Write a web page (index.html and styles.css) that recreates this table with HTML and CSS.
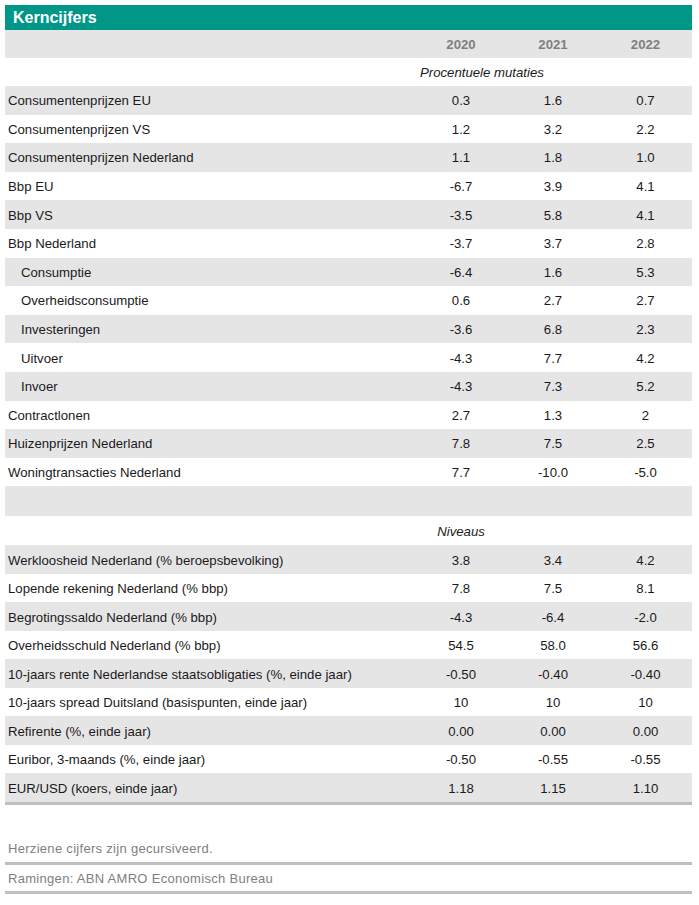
FILE: index.html
```html
<!DOCTYPE html>
<html lang="nl">
<head>
<meta charset="utf-8">
<title>Kerncijfers</title>
<link rel="stylesheet" href="styles.css">
</head>
<body>
<div class="sheet">
  <div class="title">Kerncijfers</div>
  <div class="row head gray"><span></span><span>2020</span><span>2021</span><span>2022</span></div>
  <div class="row section"><span></span><span class="sec-wide">Procentuele mutaties</span></div>
  <div class="row gray"><span>Consumentenprijzen EU</span><span>0.3</span><span>1.6</span><span>0.7</span></div>
  <div class="row"><span>Consumentenprijzen VS</span><span>1.2</span><span>3.2</span><span>2.2</span></div>
  <div class="row gray"><span>Consumentenprijzen Nederland</span><span>1.1</span><span>1.8</span><span>1.0</span></div>
  <div class="row"><span>Bbp EU</span><span>-6.7</span><span>3.9</span><span>4.1</span></div>
  <div class="row gray"><span>Bbp VS</span><span>-3.5</span><span>5.8</span><span>4.1</span></div>
  <div class="row"><span>Bbp Nederland</span><span>-3.7</span><span>3.7</span><span>2.8</span></div>
  <div class="row gray sub"><span>Consumptie</span><span>-6.4</span><span>1.6</span><span>5.3</span></div>
  <div class="row sub"><span>Overheidsconsumptie</span><span>0.6</span><span>2.7</span><span>2.7</span></div>
  <div class="row gray sub"><span>Investeringen</span><span>-3.6</span><span>6.8</span><span>2.3</span></div>
  <div class="row sub"><span>Uitvoer</span><span>-4.3</span><span>7.7</span><span>4.2</span></div>
  <div class="row gray sub"><span>Invoer</span><span>-4.3</span><span>7.3</span><span>5.2</span></div>
  <div class="row"><span>Contractlonen</span><span>2.7</span><span>1.3</span><span>2</span></div>
  <div class="row gray"><span>Huizenprijzen Nederland</span><span>7.8</span><span>7.5</span><span>2.5</span></div>
  <div class="row"><span>Woningtransacties Nederland</span><span>7.7</span><span>-10.0</span><span>-5.0</span></div>
  <div class="row gray blank"><span></span><span></span><span></span><span></span></div>
  <div class="row section niv"><span></span><span>Niveaus</span></div>
  <div class="row gray low"><span>Werkloosheid Nederland (% beroepsbevolking)</span><span>3.8</span><span>3.4</span><span>4.2</span></div>
  <div class="row low"><span>Lopende rekening Nederland (% bbp)</span><span>7.8</span><span>7.5</span><span>8.1</span></div>
  <div class="row gray low"><span>Begrotingssaldo Nederland (% bbp)</span><span>-4.3</span><span>-6.4</span><span>-2.0</span></div>
  <div class="row low"><span>Overheidsschuld Nederland (% bbp)</span><span>54.5</span><span>58.0</span><span>56.6</span></div>
  <div class="row gray low"><span>10-jaars rente Nederlandse staatsobligaties (%, einde jaar)</span><span>-0.50</span><span>-0.40</span><span>-0.40</span></div>
  <div class="row low"><span>10-jaars spread Duitsland (basispunten, einde jaar)</span><span>10</span><span>10</span><span>10</span></div>
  <div class="row gray low"><span>Refirente (%, einde jaar)</span><span>0.00</span><span>0.00</span><span>0.00</span></div>
  <div class="row low"><span>Euribor, 3-maands (%, einde jaar)</span><span>-0.50</span><span>-0.55</span><span>-0.55</span></div>
  <div class="row gray last"><span>EUR/USD (koers, einde jaar)</span><span>1.18</span><span>1.15</span><span>1.10</span></div>
  <div class="note first">Herziene cijfers zijn gecursiveerd.</div>
  <div class="note">Ramingen: ABN AMRO Economisch Bureau</div>
</div>
</body>
</html>
```

FILE: styles.css
```css
* { box-sizing: border-box; }
html, body { margin: 0; padding: 0; background: #ffffff; }
body {
  font-family: "Liberation Sans", Arial, sans-serif;
  font-size: 13.2px;
  color: #1a1a1a;
}
.sheet {
  width: 687px;
  margin: 5px 0 0 5px;
}
.title {
  height: 25px;
  background: #009688;
  color: #ffffff;
  font-weight: bold;
  font-size: 16px;
  line-height: 26px;
  padding-left: 8px;
}
.row {
  display: grid;
  grid-template-columns: 410px 92px 92px 93px;
  height: 28.6px;
  align-items: center;
  padding-top: 1px;
}
.row.head, .row.section { height: 28px; }
.row.blank { height: 30px; }
.row.niv { height: 29px; }
.row.low { height: 28.5px; }
.row > span { white-space: nowrap; }
.row > span:first-child { padding-left: 3px; }
.row > span:not(:first-child) { text-align: center; }
.row.sub > span:first-child { padding-left: 16px; }
.gray { background: #e6e5e6; }
.head > span { font-weight: bold; color: #808080; }
.section > span { font-style: italic; }
.row.section > span.sec-wide { grid-column: 2 / 5; text-align: left; padding-left: 5px; }
.row.last { border-bottom: 3px solid #bfbfbf; height: 32px; }
.note {
  color: #808080;
  height: 29px;
  line-height: 27px;
  padding-left: 3px;
  border-bottom: 3px solid #bfbfbf;
  font-size: 13px;
  letter-spacing: 0.3px;
}
.note.first { height: 60px; padding-top: 30px; }
```
